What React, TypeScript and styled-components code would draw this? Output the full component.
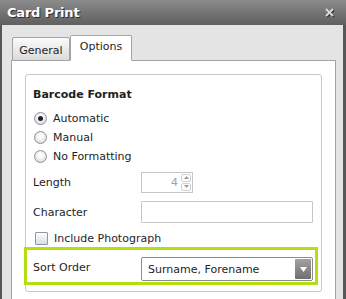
import styled, { createGlobalStyle } from 'styled-components';

const GlobalStyle = createGlobalStyle`
  body {
    margin: 0;
    font-family: "DejaVu Sans", Verdana, sans-serif;
    font-size: 11px;
    color: #1e1e1e;
  }
`;

const Window = styled.div`
  width: 346px;
  height: 299px;
  overflow: hidden;
  display: flex;
  flex-direction: column;
  background: #575757;
`;

const TitleBar = styled.div`
  height: 25px;
  flex: none;
  display: flex;
  align-items: center;
  justify-content: space-between;
  padding: 0 12px 0 7px;
  background: linear-gradient(#8c8c8c, #727272 55%, #5f5f5f);
`;

const Title = styled.span`
  font-size: 13px;
  font-weight: bold;
  color: #ffffff;
  text-shadow: 1px 1px 0 #2e2e2e;
  letter-spacing: -0.2px;
`;

const Close = styled.svg`
  width: 9px;
  height: 9px;
  filter: drop-shadow(1px 1px 0 #333);
`;

const Body = styled.div`
  flex: 1;
  display: flex;
  flex-direction: column;
  margin: 0 3px 0 2px;
  padding: 10px 7px 0 9px;
  background: #e4e4e4;
`;

const Tabs = styled.div`
  display: flex;
  align-items: flex-end;
  padding-left: 1px;
  margin-bottom: -1px;
  position: relative;
  z-index: 1;
`;

const Tab = styled.div<{ $active?: boolean }>`
  box-sizing: border-box;
  display: flex;
  align-items: center;
  justify-content: center;
  border: 1px solid #a4a4a4;
  border-radius: 2px 2px 0 0;
  width: ${(p) => (p.$active ? '62px' : '58px')};
  height: ${(p) => (p.$active ? '26px' : '24px')};
  padding-bottom: ${(p) => (p.$active ? '3px' : '0')};
  padding-top: ${(p) => (p.$active ? '0' : '2px')};
  background: ${(p) =>
    p.$active ? '#ffffff' : 'linear-gradient(#fbfbfb, #dadada)'};
  border-bottom-color: ${(p) => (p.$active ? '#ffffff' : '#a4a4a4')};
`;

const Panel = styled.div`
  flex: 1;
  background: #ffffff;
  border: 1px solid #a4a4a4;
  border-bottom: none;
  padding: 13px 13px 0 13px;
`;

const Group = styled.div`
  display: flex;
  flex-direction: column;
  border: 1px solid #c8c8c8;
  border-radius: 3px;
  padding: 13px 7px 6px 7px;
`;

const Heading = styled.div`
  font-weight: bold;
  line-height: 14px;
  height: 14px;
`;

const RadioList = styled.div`
  display: flex;
  flex-direction: column;
  margin-top: 7px;
`;

const OptionRow = styled.label`
  display: flex;
  align-items: center;
  height: 19px;
`;

const Radio = styled.span<{ $checked?: boolean }>`
  box-sizing: border-box;
  width: 13px;
  height: 13px;
  margin: 0 6px 0 1px;
  border-radius: 50%;
  border: 1px solid #8d9096;
  background: radial-gradient(circle at 50% 40%, #ffffff 15%, #cfd2d6 100%);
  display: flex;
  align-items: center;
  justify-content: center;

  &::after {
    content: '';
    display: ${(p) => (p.$checked ? 'block' : 'none')};
    width: 5px;
    height: 5px;
    border-radius: 50%;
    background: #222;
  }
`;

const Checkbox = styled.span`
  box-sizing: border-box;
  width: 13px;
  height: 13px;
  margin: 0 6px 0 2px;
  border: 1px solid #8d99a8;
  border-radius: 1px;
  background: linear-gradient(#fdfdfd, #d9dee5);
`;

const FieldRow = styled.div<{ $gap: number }>`
  display: flex;
  align-items: center;
  height: 22px;
  margin-top: ${(p) => p.$gap}px;
`;

const Label = styled.span`
  width: 108px;
  flex: none;
`;

const NumberBox = styled.div`
  box-sizing: border-box;
  width: 52px;
  height: 21px;
  display: flex;
  align-items: center;
  justify-content: flex-end;
  border: 1px solid #c6c6c6;
  padding-right: 1px;
  color: #a0a0a0;
`;

const Spinner = styled.div`
  display: flex;
  flex-direction: column;
  gap: 1px;
  margin-left: 3px;
`;

const SpinButton = styled.span`
  box-sizing: border-box;
  width: 10px;
  height: 8px;
  border: 1px solid #d2d2d2;
  border-radius: 2px;
  display: flex;
  align-items: center;
  justify-content: center;
`;

const TextBox = styled.div`
  box-sizing: border-box;
  width: 172px;
  height: 22px;
  border: 1px solid #c6c6c6;
  border-radius: 1px;
`;

const CheckRow = styled.label`
  display: flex;
  align-items: center;
  height: 18px;
  margin-top: 6px;
`;

const Highlight = styled.div`
  display: flex;
  align-items: flex-end;
  height: 38px;
  box-sizing: border-box;
  margin: 0 -4px 0 -9px;
  padding: 0 1px 1px 6px;
  border: 3px solid #b2de12;
`;

const SortLabel = styled.span`
  width: 108px;
  flex: none;
  align-self: center;
  padding-top: 3px;
`;

const Select = styled.div`
  box-sizing: border-box;
  width: 172px;
  height: 24px;
  display: flex;
  align-items: stretch;
  border: 1px solid #8c8c8c;
  border-radius: 2px;
  padding: 1px;
`;

const SelectText = styled.span`
  flex: 1;
  display: flex;
  align-items: center;
  padding-left: 5px;
`;

const SelectArrow = styled.span`
  width: 16px;
  display: flex;
  align-items: center;
  justify-content: center;
  border-radius: 1px;
  background: linear-gradient(#a2a2a2, #6f6f6f);
`;

const Tri = ({ up, color }: { up?: boolean; color: string }) => (
  <svg width="5" height="3" viewBox="0 0 5 3">
    <path d={up ? 'M0 3 L2.5 0 L5 3 Z' : 'M0 0 L5 0 L2.5 3 Z'} fill={color} />
  </svg>
);

export default function App() {
  return (
    <>
      <GlobalStyle />
      <Window>
        <TitleBar>
          <Title>Card Print</Title>
          <Close viewBox="0 0 9 9">
            <path d="M1 1 L8 8 M8 1 L1 8" stroke="#d8d8d8" strokeWidth="2" />
          </Close>
        </TitleBar>
        <Body>
          <Tabs>
            <Tab>General</Tab>
            <Tab $active>Options</Tab>
          </Tabs>
          <Panel>
            <Group>
              <Heading>Barcode Format</Heading>
              <RadioList>
                <OptionRow>
                  <Radio $checked />
                  Automatic
                </OptionRow>
                <OptionRow>
                  <Radio />
                  Manual
                </OptionRow>
                <OptionRow>
                  <Radio />
                  No Formatting
                </OptionRow>
              </RadioList>
              <FieldRow $gap={5}>
                <Label>Length</Label>
                <NumberBox>
                  4
                  <Spinner>
                    <SpinButton>
                      <Tri up color="#9a9a9a" />
                    </SpinButton>
                    <SpinButton>
                      <Tri color="#9a9a9a" />
                    </SpinButton>
                  </Spinner>
                </NumberBox>
              </FieldRow>
              <FieldRow $gap={8}>
                <Label>Character</Label>
                <TextBox />
              </FieldRow>
              <CheckRow>
                <Checkbox />
                Include Photograph
              </CheckRow>
              <Highlight>
                <SortLabel>Sort Order</SortLabel>
                <Select>
                  <SelectText>Surname, Forename</SelectText>
                  <SelectArrow>
                    <svg width="7" height="5" viewBox="0 0 7 5">
                      <path d="M0 0 L7 0 L3.5 5 Z" fill="#ffffff" />
                    </svg>
                  </SelectArrow>
                </Select>
              </Highlight>
            </Group>
          </Panel>
        </Body>
      </Window>
    </>
  );
}
